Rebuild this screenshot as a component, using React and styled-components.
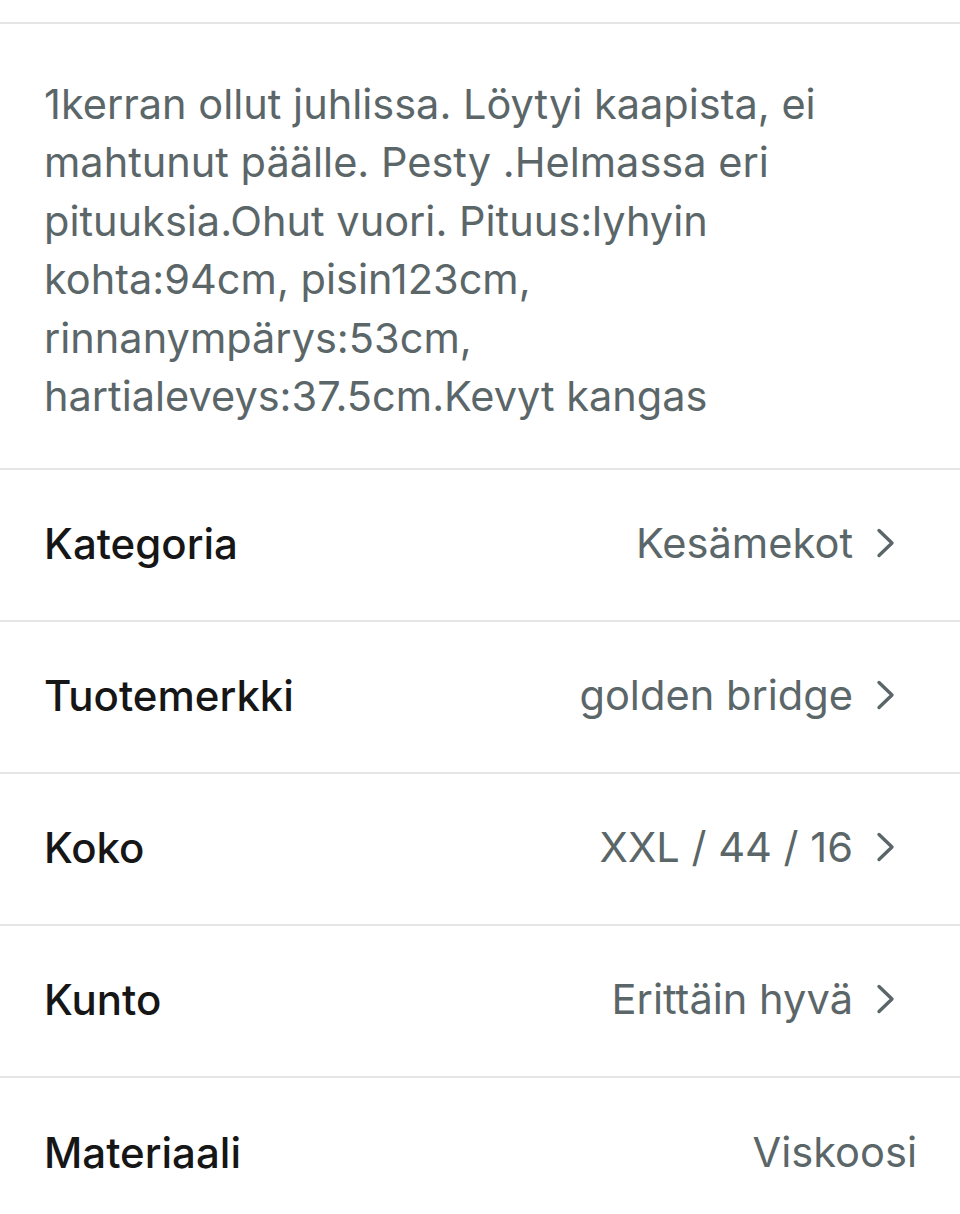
import styled, { createGlobalStyle } from 'styled-components';

const GlobalStyle = createGlobalStyle`
    html, body {
        margin: 0;
        padding: 0;
        background: #ffffff;
    }
    body {
        font-family: Inter, "Noto Sans", "Liberation Sans", sans-serif;
        -webkit-font-smoothing: antialiased;
    }
`;

const rows = [
    { label: 'Kategoria', value: 'Kesämekot', link: true },
    { label: 'Tuotemerkki', value: 'golden bridge', link: true },
    { label: 'Koko', value: 'XXL / 44 / 16', link: true },
    { label: 'Kunto', value: 'Erittäin hyvä', link: true },
    { label: 'Materiaali', value: 'Viskoosi', link: false },
];

function Chevron() {
    return (
        <ChevronIcon viewBox="0 0 42 42" aria-hidden="true">
            <path d="M4 8.5 L17 21 L4 33.5" />
        </ChevronIcon>
    );
}

export default function App() {
    return (
        <>
            <GlobalStyle />
            <Page>
                <Description>
                    1kerran ollut juhlissa. Löytyi kaapista, ei mahtunut päälle. Pesty .Helmassa eri
                    pituuksia.Ohut vuori. Pituus:lyhyin kohta:94cm, pisin123cm, rinnanympärys:53cm,
                    hartialeveys:37.5cm.Kevyt kangas
                </Description>

                {rows.map((r) => (
                    <DetailRow key={r.label}>
                        <Label>{r.label}</Label>
                        <ValueWrap>
                            <Value>{r.value}</Value>
                            {r.link && <Chevron />}
                        </ValueWrap>
                    </DetailRow>
                ))}
            </Page>
        </>
    );
}

const Page = styled.div`
    width: 960px;
    min-height: 1214px;
    padding-top: 22px;
    box-sizing: border-box;
    background: #ffffff;
    overflow: hidden;
`;

const Description = styled.p`
    margin: 0;
    border-top: 2px solid #e5e5e5;
    border-bottom: 2px solid #e5e5e5;
    padding: 51px 44px 43px 44px;
    font-size: 41.5px;
    line-height: 58.4px;
    font-weight: 400;
    color: #5b6669;
`;

const DetailRow = styled.div`
    height: 152px;
    box-sizing: border-box;
    display: flex;
    align-items: center;
    justify-content: space-between;
    padding: 0 43px 4px 44px;
    border-bottom: 2px solid #e5e5e5;
    &:last-child {
        border-bottom: none;
    }
`;

const Label = styled.div`
    font-size: 42px;
    font-weight: 500;
    color: #161616;
`;

const ValueWrap = styled.div`
    display: flex;
    align-items: center;
`;

const Value = styled.div`
    font-size: 41.6px;
    font-weight: 400;
    color: #5b6669;
`;

const ChevronIcon = styled.svg`
    width: 42px;
    height: 42px;
    margin-left: 22px;
    fill: none;
    stroke: #5b6669;
    stroke-width: 3.4;
    stroke-linecap: round;
    stroke-linejoin: round;
`;
